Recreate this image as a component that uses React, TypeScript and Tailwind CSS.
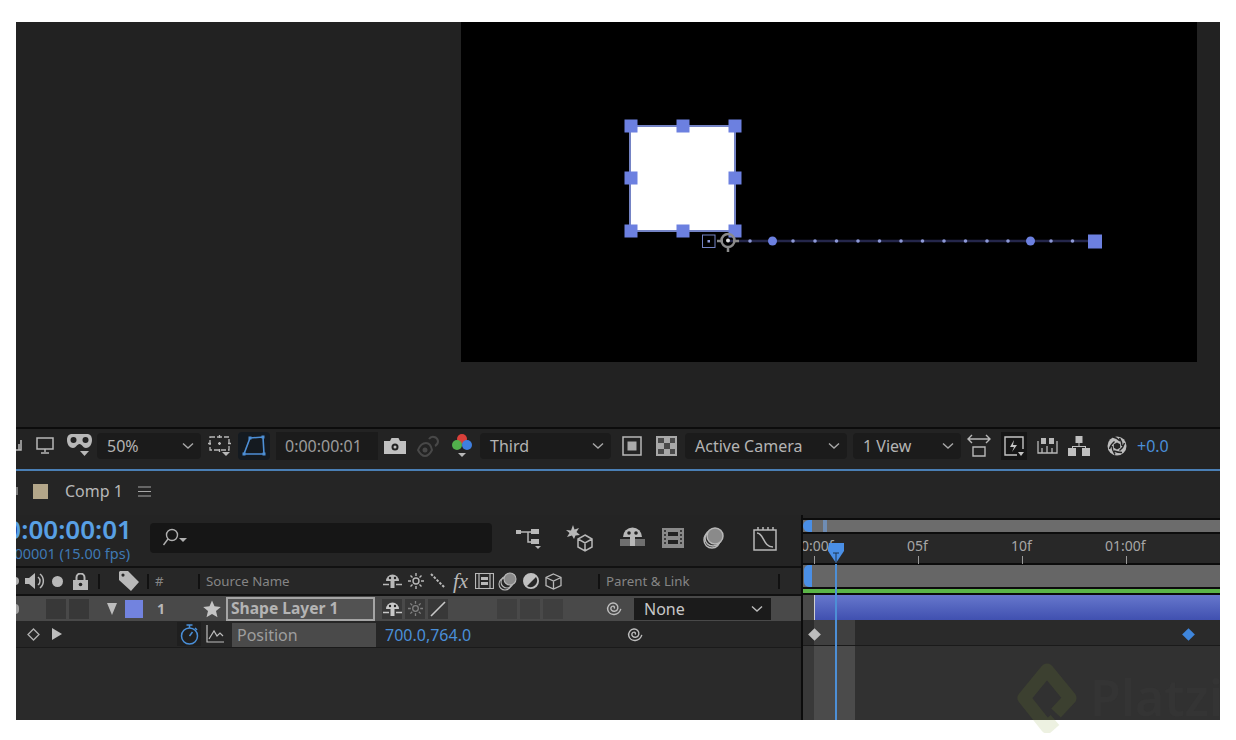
import type { ReactNode } from 'react';

const font = "font-['Noto_Sans','Open_Sans',sans-serif]";

function Chevron({ className = '' }: { className?: string }) {
  return (
    <svg className={`w-3 h-2 ${className}`} viewBox="0 0 12 8" fill="none" stroke="currentColor" strokeWidth={1.4}>
      <path d="M1 1.500l5 4.500 5-4.500" />
    </svg>
  );
}

function Select({ label, width, ml }: { label: string; width: string; ml: string }) {
  return (
    <div className={`${width} ${ml} h-[26px] shrink-0 bg-[#1b1b1b] rounded-sm flex items-center justify-between pl-[10px] pr-[7px] text-[16px] text-[#b4b4b4]`}>
      <span>{label}</span>
      <Chevron className="text-[#a8a8a8]" />
    </div>
  );
}

function Icon({ w, h, ml, children }: { w: number; h: number; ml: string; children: ReactNode }) {
  return (
    <svg
      className={`${ml} shrink-0 text-[#b8b8b8]`}
      width={w}
      height={h}
      viewBox={`0 0 ${w} ${h}`}
      fill="none"
      stroke="currentColor"
      strokeWidth={1.5}
    >
      {children}
    </svg>
  );
}

function Sep({ ml }: { ml: string }) {
  return <div className={`${ml} w-[2px] h-[15px] bg-[#111] shrink-0`} />;
}

function Spiral() {
  return (
    <path d="M9 9.500c1-1 .2-2.600-1.200-2.400-2 .2-2.600 2.800-1.200 4.200 2 2 5.600.8 6.200-2 .6-3-2-5.600-5-5.300-3.400.3-5.800 3.700-5 7 .7 3 3.600 4.800 6.600 4.500 3-.3 5.600-2.600 6.400-5.600" />
  );
}

function Shy() {
  return (
    <>
      <path d="M3 8a6.500 6.500 0 0 1 13 0z" fill="currentColor" stroke="none" />
      <circle cx="7" cy="5" r="1.200" fill="#222" stroke="none" />
      <circle cx="12" cy="5" r="1.200" fill="#222" stroke="none" />
      <path d="M7.500 8h4v7h-4z" fill="currentColor" stroke="none" />
      <path d="M0 11.500h6M13 11.500h6" />
    </>
  );
}

function Sun({ size, className }: { size: number; className: string }) {
  return (
    <svg className={className} width={size} height={size} viewBox="0 0 16 16" fill="none" stroke="currentColor" strokeWidth={1.4}>
      <circle cx="8" cy="8" r="3" />
      <path d="M8 0v3M8 13v3M0 8h3M13 8h3M2.500 2.500l2 2M11.500 11.500l2 2M13.500 2.500l-2 2M4.500 11.500l-2 2" />
    </svg>
  );
}

function Star({ className }: { className: string }) {
  return (
    <svg className={className} width="18" height="18" viewBox="0 0 18 18" fill="currentColor">
      <path d="M9 .5l2.500 5.800 6.300.6-4.800 4.100 1.500 6.200L9 13.900l-5.500 3.300L5 11 .2 6.900l6.300-.6z" />
    </svg>
  );
}

function Toolbar() {
  return (
    <div className="h-[42px] border-t-2 border-[#0c0c0c] bg-[#232323] flex items-center shrink-0 overflow-hidden pb-[7px]">
      <Icon w={7} h={14} ml="ml-0">
        <path d="M0 11h5V1M3 11V5" />
      </Icon>
      {/* monitor */}
      <Icon w={18} h={17} ml="ml-[13px]">
        <path d="M1 1h16v11H1zM9 12v3M5 16h8" />
      </Icon>
      {/* 3d glasses */}
      <Icon w={25} h={23} ml="ml-[13px]">
        <path
          d="M5 0h15c3 0 5 2 5 6 0 5-3 8-6 8-3 0-4-4-6.500-4S9 14 6 14C3 14 0 11 0 6c0-4 2-6 5-6z"
          fill="currentColor"
          stroke="none"
        />
        <circle cx="6.500" cy="6" r="3" fill="#222" stroke="none" />
        <circle cx="18.500" cy="6" r="3" fill="#222" stroke="none" />
        <path d="M13 17h9l-4.500 5z" fill="currentColor" stroke="none" />
      </Icon>
      <Select label="50%" width="w-[104px]" ml="ml-[5px]" />
      {/* grid */}
      <Icon w={23} h={24} ml="ml-[7px]">
        <path d="M2 3h19v13H2z" strokeWidth={1.3} strokeDasharray="5 2" />
        <path d="M11.500 1v3M11.500 15v3M0 9.500h3M20 9.500h3M10 9.500h3M11.500 8v3" strokeWidth={1.3} />
        <path d="M14 18h8l-4 4z" fill="currentColor" stroke="none" />
      </Icon>
      {/* mask and shape path */}
      <div className="ml-[7px] w-[32px] h-[28px] shrink-0 bg-[#141a20] rounded-sm flex items-center justify-center">
        <svg width="24" height="22" viewBox="0 0 24 22" fill="none" stroke="#4d8fd6" strokeWidth={1.6}>
          <path d="M8 3l13-1 1 17H2z" />
          <path d="M6.500 1.500h3v3h-3zM19.500 .5h3v3h-3zM.5 17.500h3v3h-3zM20.500 17.500h3v3h-3z" fill="#4d8fd6" stroke="none" />
        </svg>
      </div>
      <div className="ml-[6px] w-[102px] h-[28px] shrink-0 bg-[#1b1b1b] flex items-center pl-[9px] text-[16px] text-[#9c9c9c]">
        0:00:00:01
      </div>
      {/* camera */}
      <Icon w={22} h={16} ml="ml-[6px]">
        <path d="M0 3h6l1.500-3h7L16 3h6v13H0z" fill="#c0c0c0" stroke="none" />
        <circle cx="11" cy="9" r="3.500" fill="#222" stroke="none" />
        <circle cx="11" cy="9" r="1.500" fill="#c0c0c0" stroke="none" />
      </Icon>
      {/* show snapshot, disabled */}
      <svg className="ml-[11px] shrink-0" width="23" height="22" viewBox="0 0 23 22" fill="none" stroke="#484848" strokeWidth={2}>
        <path d="M1 15c2-5 5-7 8-7s5 2 6 7c-2 4-4 6-7 6s-5-2-7-6z" />
        <circle cx="8" cy="15" r="2.500" fill="#484848" stroke="none" />
        <path d="M12 4a5 5 0 0 1 9 2c0 2-1 4-3 5" />
      </svg>
      {/* channels */}
      <svg className="ml-[12px] shrink-0" width="20" height="25" viewBox="0 0 20 25">
        <circle cx="10" cy="6" r="5" fill="#d9403a" />
        <circle cx="5" cy="12" r="5" fill="#52b04c" />
        <circle cx="15" cy="12" r="5" fill="#3f7fe0" />
        <path d="M6 20h8l-4 4z" fill="#b8b8b8" />
      </svg>
      <Select label="Third" width="w-[131px]" ml="ml-[8px]" />
      {/* region of interest */}
      <Icon w={20} h={20} ml="ml-[11px]">
        <path d="M1 1h18v18H1z" />
        <path d="M5.500 5.500h9v9h-9z" fill="#aaa" stroke="none" />
      </Icon>
      {/* transparency grid */}
      <svg className="ml-[14px] shrink-0" width="21" height="20" viewBox="0 0 21 20">
        <path d="M0 0h21v20H0z" fill="#a8a8a8" />
        <path d="M2 2h6v5H2zM14 2h5v5h-5zM8 7h6v6H8zM2 13h6v5H2zM14 13h5v5h-5z" fill="#4a4a4a" />
      </svg>
      <Select label="Active Camera" width="w-[162px]" ml="ml-[8px]" />
      <Select label="1 View" width="w-[108px]" ml="ml-[6px]" />
      {/* pixel aspect */}
      <Icon w={24} h={24} ml="ml-[6px]">
        <path d="M1 5h22M5 1L1 5l4 4M19 1l4 4-4 4M6 13h12v9H6z" strokeWidth={1.4} />
      </Icon>
      {/* fast previews */}
      <div className="ml-[10px] w-[26px] h-[28px] shrink-0 bg-[#161616] flex items-center justify-center">
        <svg className="text-[#c4c4c4]" width="22" height="22" viewBox="0 0 22 22" fill="none" stroke="currentColor" strokeWidth={1.4}>
          <path d="M14 20H2V2h18v12" />
          <path d="M11 5l-4 7h4l-2 5 5-7h-4z" fill="currentColor" stroke="none" />
          <path d="M15 17h6l-3 4z" fill="currentColor" stroke="none" />
        </svg>
      </div>
      {/* timeline */}
      <Icon w={21} h={18} ml="ml-[10px]">
        <path d="M1 4v12h19V4M5 16v-5M10 16V9M15 16v-5" strokeWidth={1.3} />
        <path d="M4 1h5v6H4zM12 1h5v6h-5z" fill="currentColor" stroke="none" />
      </Icon>
      {/* flowchart */}
      <svg className="ml-[10px] shrink-0 text-[#c0c0c0]" width="22" height="20" viewBox="0 0 22 20" fill="currentColor">
        <path d="M7.500 0h7v7h-7zM0 12h8v8H0zM14 12h8v8h-8z" />
        <path d="M10.500 7h1v3H18v3h-1v-2H5v2H4v-3h6.500z" />
      </svg>
      {/* exposure */}
      <svg className="ml-[17px] shrink-0" width="20" height="20" viewBox="0 0 20 20" fill="none">
        <circle cx="10" cy="10" r="9.500" fill="#bdbdbd" />
        <path d="M13 5C11 3 9 1.500 6 1M15 10c0-3-.5-5-2.500-8M12.500 14.500C14.500 13 16.500 11 17.500 7M7 15c2.500 1 5 1.500 8 1.500M5 10c0 2.500 .5 5 3 8.500M7.500 5.500C5.500 7 3.500 9 2.500 13" stroke="#232323" strokeWidth={1.4} />
        <path d="M10 6.500l3.200 1.800v3.500L10 13.500l-3.200-1.700V8.300z" fill="#232323" />
      </svg>
      <span className="ml-[10px] text-[16px] text-[#4a8fd8] shrink-0">+0.0</span>
    </div>
  );
}

function LeftPane() {
  return (
    <div className="w-[785px] shrink-0 flex flex-col overflow-hidden">
      {/* time and search */}
      <div className="h-[51px] shrink-0 flex items-start overflow-hidden">
        <div className="w-[142px] shrink-0 -ml-[8px]">
          <div className="flex justify-end pr-[18px] text-[26px] leading-[28px] font-semibold text-[#58a0e4] whitespace-nowrap">0:00:00:01</div>
          <div className="flex justify-end pr-[20px] text-[14.5px] leading-[18px] mt-[1px] text-[#3f79b4] whitespace-nowrap">00001 (15.00 fps)</div>
        </div>
        <div className="mt-[8px] w-[342px] h-[30px] bg-[#161616] rounded-sm flex items-center pl-[12px] shrink-0">
          <svg className="text-[#b0b0b0]" width="26" height="20" viewBox="0 0 26 20" fill="none" stroke="currentColor" strokeWidth={1.4}>
            <circle cx="10" cy="7" r="5.500" />
            <path d="M6 11l-4.500 6" />
            <path d="M17 10h8l-4 4z" fill="currentColor" stroke="none" />
          </svg>
        </div>
        <div className="flex items-center mt-[8px] h-[30px]">
          <Icon w={26} h={24} ml="ml-[24px]">
            <path d="M0 4h5v4H0zM15 3h8v5h-8zM15 13h8v5h-8z" fill="currentColor" stroke="none" />
            <path d="M5 6h10M12 6v10h3" />
            <path d="M19 20h6l-3 3z" fill="currentColor" stroke="none" />
          </Icon>
          <Icon w={28} h={28} ml="ml-[24px]">
            <path d="M7 1l1.500 4.500L13 4l-2.500 4L14 11l-4.500.5L8 15l-2-3.500L1 13l2.500-4L0 6l5 .5z" fill="currentColor" stroke="none" />
            <path d="M19 11l7 4v8l-7 4-7-4v-8zM12 15l7 4 7-4M19 19v8" />
          </Icon>
          <Icon w={25} h={24} ml="ml-[26px]">
            <path d="M3 11a9.500 9.500 0 0 1 19 0z" fill="currentColor" stroke="none" />
            <circle cx="9" cy="7" r="1.800" fill="#222" stroke="none" />
            <circle cx="16" cy="7" r="1.800" fill="#222" stroke="none" />
            <path d="M0 13h25v7H0z" fill="#6f6f6f" stroke="none" />
            <path d="M10 11h5v9h-5z" fill="currentColor" stroke="none" />
          </Icon>
          <Icon w={22} h={24} ml="ml-[17px]">
            <path d="M0 2h22v20H0z" fill="#8a8a8a" stroke="none" />
            <path d="M6 6h10v4H6zM6 14h10v4H6z" fill="#222" stroke="none" />
            <path d="M2 5h2M2 9h2M2 13h2M2 17h2M18 5h2M18 9h2M18 13h2M18 17h2" stroke="#222" />
          </Icon>
          <Icon w={22} h={24} ml="ml-[18px]">
            <circle cx="10" cy="14" r="8" />
            <circle cx="11" cy="12" r="8" />
            <circle cx="13" cy="10" r="8" fill="#8a8a8a" />
          </Icon>
          <Icon w={26} h={26} ml="ml-[28px]">
            <path d="M2 5h22v20H2zM6 5V2M11 5V2M16 5V2M21 5V2" />
            <path d="M5 8c7 0 6 14 16 14" />
          </Icon>
        </div>
      </div>

      {/* column headers */}
      <div className="h-[30px] shrink-0 border-y-2 border-[#111] bg-[#272727] flex items-center text-[13.3px] text-[#858585]">
        <svg className="shrink-0" width="3" height="10" viewBox="0 0 3 10">
          <circle cx="-1" cy="5" r="4" fill="#b0b0b0" />
        </svg>
        <svg className="ml-[6px] shrink-0 text-[#b8b8b8]" width="20" height="20" viewBox="0 0 20 20" fill="none" stroke="currentColor" strokeWidth={1.5}>
          <path d="M0 7h4l6-5v16l-6-5H0z" fill="currentColor" stroke="none" />
          <path d="M13 6a5 5 0 0 1 0 8M15 3a9 9 0 0 1 0 14" />
        </svg>
        <div className="ml-[7px] w-[11px] h-[11px] rounded-full bg-[#b8b8b8] shrink-0" />
        <svg className="ml-[10px] shrink-0 text-[#b8b8b8]" width="15" height="17" viewBox="0 0 15 17" fill="none" stroke="currentColor" strokeWidth={2}>
          <path d="M3.500 7V4.500a4 4 0 0 1 8 0V7" />
          <path d="M0 7h15v10H0z" fill="currentColor" stroke="none" />
          <circle cx="7.500" cy="11.500" r="1.800" fill="#222" stroke="none" />
        </svg>
        <Sep ml="ml-[10px]" />
        <svg className="ml-[19px] shrink-0 text-[#b8b8b8]" width="20" height="20" viewBox="0 0 20 20" fill="currentColor">
          <path fillRule="evenodd" d="M1 0h8l11 11-8 9L0 9V1zm3 2.500a1.600 1.600 0 1 0 0 3.200 1.600 1.600 0 0 0 0-3.200z" />
        </svg>
        <Sep ml="ml-[8px]" />
        <span className="ml-[6px] w-[10px] pt-[1px]">#</span>
        <Sep ml="ml-[33px]" />
        <span className="ml-[6px] w-[177px] shrink-0 pt-[1px]">Source Name</span>
        <svg className="shrink-0 text-[#b8b8b8]" width="19" height="16" viewBox="0 0 19 16" fill="none" stroke="currentColor" strokeWidth={1.5}>
          <Shy />
        </svg>
        <Sun size={16} className="ml-[6px] shrink-0 text-[#b8b8b8]" />
        <svg className="ml-[6px] shrink-0 text-[#b8b8b8]" width="16" height="16" viewBox="0 0 16 16" stroke="currentColor" strokeWidth={2} strokeDasharray="2.500 1.500">
          <path d="M1 1l14 14" />
        </svg>
        <span className="ml-[7px] w-[18px] shrink-0 text-[21px] leading-none italic text-[#b8b8b8] font-['Liberation_Serif',serif]">fx</span>
        <svg className="ml-[4px] shrink-0 text-[#b8b8b8]" width="19" height="16" viewBox="0 0 19 16" fill="none" stroke="currentColor" strokeWidth={1.2}>
          <path d="M.5.5h18v15H.5zM4 .5v15M15 .5v15" />
          <path d="M6 4h7v3H6zM6 9h7v3H6z" fill="currentColor" stroke="none" />
        </svg>
        <svg className="ml-[4px] shrink-0 text-[#b8b8b8]" width="19" height="19" viewBox="0 0 19 19" fill="none" stroke="currentColor" strokeWidth={1.1}>
          <circle cx="7" cy="12" r="6" />
          <circle cx="9" cy="10" r="6" />
          <circle cx="12" cy="7" r="6" fill="#8a8a8a" />
        </svg>
        <svg className="ml-[6px] shrink-0 text-[#c0c0c0]" width="16" height="16" viewBox="0 0 16 16" fill="currentColor">
          <path d="M8 0a8 8 0 1 1 0 16A8 8 0 0 1 8 0zm5 4L4 13a6.500 6.500 0 0 0 9-9z" fillRule="evenodd" />
        </svg>
        <svg className="ml-[6px] shrink-0 text-[#b8b8b8]" width="17" height="17" viewBox="0 0 17 17" fill="none" stroke="currentColor" strokeWidth={1.3}>
          <path d="M8.500 1L16 4.500v8L8.500 16 1 12.500v-8zM1 4.500L8.500 8 16 4.500M8.500 8v8" />
        </svg>
        <Sep ml="ml-[36px]" />
        <span className="ml-[6px] w-[172px] shrink-0 pt-[1px]">Parent &amp; Link</span>
        <Sep ml="ml-0" />
      </div>

      {/* layer row */}
      <div className="h-[25px] shrink-0 bg-[#494949] flex items-center text-[16px]">
        <div className="w-[4px] h-[10px] rounded-r-full bg-[#a0a0a0] -ml-[1px] shrink-0" />
        <div className="ml-[27px] w-[20px] h-[20px] bg-[#383838] shrink-0" />
        <div className="ml-[3px] w-[20px] h-[20px] bg-[#383838] shrink-0" />
        <svg className="ml-[18px] shrink-0" width="10" height="12" viewBox="0 0 10 12">
          <path d="M0 0h10L5 12z" fill="#bdbdbd" />
        </svg>
        <div className="ml-[8px] w-[18px] h-[18px] bg-[#7283df] shrink-0" />
        <span className="ml-[14px] w-[8px] font-bold text-[#b8b8b8] text-[14px]">1</span>
        <Star className="ml-[38px] shrink-0 text-[#c4c4c4]" />
        <div className="ml-[5px] w-[149px] h-[24px] shrink-0 border-2 border-[#a5a5a5] bg-[#525252] flex items-center pl-[3px] font-bold text-[#b4b4b4] text-[15.6px] whitespace-nowrap">
          Shape Layer 1
        </div>
        <div className="ml-[7px] w-[20px] h-[20px] bg-[#383838] shrink-0 flex items-center justify-center">
          <svg className="text-[#c8c8c8]" width="19" height="16" viewBox="0 0 19 16" fill="none" stroke="currentColor" strokeWidth={1.5}>
            <Shy />
          </svg>
        </div>
        <div className="ml-[3px] w-[20px] h-[20px] bg-[#383838] shrink-0 flex items-center justify-center">
          <Sun size={15} className="text-[#808080]" />
        </div>
        <div className="ml-[3px] w-[20px] h-[20px] bg-[#383838] shrink-0 flex items-center justify-center">
          <svg className="text-[#c8c8c8]" width="16" height="16" viewBox="0 0 16 16" stroke="currentColor" strokeWidth={1.6}>
            <path d="M1 15L15 1" />
          </svg>
        </div>
        <div className="ml-[49px] w-[20px] h-[20px] bg-[#3f3f3f] shrink-0" />
        <div className="ml-[3px] w-[20px] h-[20px] bg-[#3f3f3f] shrink-0" />
        <div className="ml-[3px] w-[20px] h-[20px] bg-[#3f3f3f] shrink-0" />
        <svg className="ml-[42px] shrink-0 text-[#bdbdbd]" width="19" height="19" viewBox="0 0 19 19" fill="none" stroke="currentColor" strokeWidth={1.4}>
          <Spiral />
        </svg>
        <div className="ml-[10px] w-[137px] h-[22px] shrink-0 bg-[#1b1b1b] flex items-center justify-between pl-[10px] pr-[8px] text-[#c8c8c8]">
          <span>None</span>
          <Chevron className="text-[#bdbdbd]" />
        </div>
      </div>

      {/* property row */}
      <div className="h-[27px] shrink-0 bg-[#262626] border-b border-[#1a1a1a] flex items-center text-[16px]">
        <svg className="ml-[11px] shrink-0 text-[#b0b0b0]" width="13" height="13" viewBox="0 0 13 13" fill="none" stroke="currentColor" strokeWidth={1.3}>
          <path d="M6.500 1l5.500 5.500L6.500 12 1 6.500z" />
        </svg>
        <svg className="ml-[12px] shrink-0" width="10" height="12" viewBox="0 0 10 12">
          <path d="M0 0l10 6-10 6z" fill="#bdbdbd" />
        </svg>
        <div className="ml-[115px] w-[24px] h-[24px] bg-[#1f1f1f] shrink-0 flex items-center justify-center">
          <svg className="text-[#4a8fd8]" width="19" height="21" viewBox="0 0 19 21" fill="none" stroke="currentColor" strokeWidth={1.5}>
            <circle cx="9.500" cy="12" r="8" />
            <path d="M6.500 1h6M9.500 1v3M9.500 12l3-4M15 4l2 2" />
          </svg>
        </div>
        <svg className="ml-[5px] shrink-0 text-[#bdbdbd]" width="18" height="18" viewBox="0 0 18 18" fill="none" stroke="currentColor" strokeWidth={1.2}>
          <path d="M1 0v17h17M3 14l5-8 3 5 3-3 3 3" />
        </svg>
        <div className="ml-[8px] w-[144px] h-[24px] mt-[2px] bg-[#4a4a4a] shrink-0 flex items-center pl-[5px] text-[#9e9e9e]">Position</div>
        <span className="ml-[9px] w-[241px] pt-[1px] shrink-0 text-[#4a8fd8] text-[16px]">700.0,764.0</span>
        <svg className="shrink-0 text-[#bdbdbd]" width="19" height="19" viewBox="0 0 19 19" fill="none" stroke="currentColor" strokeWidth={1.4}>
          <Spiral />
        </svg>
      </div>
      <div className="flex-1 bg-[#2a2a2a]" />
    </div>
  );
}

function RightPane() {
  return (
    <div className="flex-1 min-w-0 relative flex flex-col overflow-hidden">
      <div className="h-[3px] shrink-0" />
      {/* navigator */}
      <div className="h-[16px] shrink-0 border-y-2 border-[#0c0c0c] bg-[#6c6c6c] relative">
        <div className="absolute left-0 top-0 h-full w-[9px] bg-[#4a8fe6] rounded-l-full" />
        <div className="absolute left-[20px] top-0 h-full w-[4px] bg-[#6f8db4]" />
      </div>
      {/* ruler */}
      <div className="h-[31px] shrink-0 bg-[#282828] border-b-2 border-[#0c0c0c] relative text-[14px] leading-none text-[#a6a6a6]">
        <span className="absolute -left-[2px] top-[5px]">0:00f</span>
        <span className="absolute left-[104px] top-[5px]">05f</span>
        <span className="absolute left-[208px] top-[5px]">10f</span>
        <span className="absolute left-[302px] top-[5px]">01:00f</span>
        <div className="absolute left-[11px] top-[22px] w-px h-[8px] bg-[#9a9a9a]" />
        <div className="absolute left-[115px] top-[22px] w-px h-[8px] bg-[#9a9a9a]" />
        <div className="absolute left-[219px] top-[22px] w-px h-[8px] bg-[#9a9a9a]" />
        <div className="absolute left-[323px] top-[22px] w-px h-[8px] bg-[#9a9a9a]" />
      </div>
      {/* work area */}
      <div className="h-[24px] shrink-0 bg-[#666] border-b-2 border-[#0c0c0c] relative">
        <div className="absolute left-[1px] top-0 h-[22px] w-[8px] bg-[#4a8fe6] rounded-l-[5px]" />
      </div>
      <div className="h-[6px] shrink-0 bg-[#5bb548] border-b-2 border-[#0c0c0c]" />
      {/* layer bar */}
      <div className="h-[25px] shrink-0 bg-[#4a4a4a] pl-[11px]">
        <div className="h-full border-l border-[#cfcfcf] bg-gradient-to-b from-[#6777cc] to-[#4050b0]" />
      </div>
      {/* keyframes and lower area */}
      <div className="flex-1 grid grid-cols-[11px_41px_1fr] grid-rows-[26px_1fr]">
        <div className="bg-[#2b2b2b] border-b border-[#1a1a1a]" />
        <div className="bg-[#404040] border-b border-[#1a1a1a]" />
        <div className="bg-[#2a2a2a] border-b border-[#1a1a1a]" />
        <div className="bg-[#393939]" />
        <div className="bg-[#4b4b4b]" />
        <div className="bg-[#313131]" />
      </div>
      <div className="absolute left-[5px] top-[113px] w-[12px] h-[12px] flex items-center justify-center">
        <div className="w-[9px] h-[9px] rotate-45 bg-[#bdbdbd]" />
      </div>
      <div className="absolute left-[379px] top-[113px] w-[12px] h-[12px] flex items-center justify-center">
        <div className="w-[9px] h-[9px] rotate-45 bg-[#3f86dc]" />
      </div>
      {/* playhead */}
      <div className="absolute left-[32px] top-[49px] bottom-0 w-[2px] bg-[#4d8fd6]" />
      <svg className="absolute left-[24px] top-[28px]" width="18" height="21" viewBox="0 0 18 21">
        <path d="M2 0h15v8l-8 12-8-12V5z" fill="#4a8fe6" />
        <path d="M6 10h6M9 10v9" stroke="#1c3550" strokeWidth={1} />
      </svg>
      <span className="absolute left-[287px] top-[157px] text-[#343434] text-[50px] font-semibold leading-none whitespace-nowrap">
        Platzi
      </span>
    </div>
  );
}

function Viewer() {
  const dots = [750, 793, 815, 836.5, 858, 879.5, 901, 922.5, 944, 965.5, 987, 1008, 1051, 1072.5];
  const handles = [
    [631, 126],
    [683, 126],
    [735, 126],
    [631, 178],
    [735, 178],
    [631, 231],
    [683, 231],
    [735, 231],
  ];
  return (
    <div className="h-[405px] shrink-0 bg-[#222] flex justify-end pr-[23px]">
      <div className="w-[736px] h-[340px] bg-black">
        <svg className="block" width="736" height="340" viewBox="461 22 736 340">
          <rect x="630" y="126" width="105" height="105" fill="#fff" stroke="#7483c4" strokeWidth={2} />
          {handles.map(([x, y]) => (
            <rect key={`${x}-${y}`} x={x - 6.5} y={y - 6.5} width="13" height="13" fill="#6c80e0" />
          ))}
          <path d="M728 241H1095" stroke="#24264a" strokeWidth={2.5} />
          {dots.map((x) => (
            <circle key={x} cx={x} cy="241" r="1.800" fill="#8e9ad8" />
          ))}
          <circle cx="772.500" cy="241" r="4.500" fill="#6c80e0" />
          <circle cx="1030.500" cy="241" r="4.500" fill="#6c80e0" />
          <rect x="1088" y="234.500" width="14" height="14" fill="#6c80e0" />
          <rect x="702.500" y="235" width="12.500" height="12.500" fill="none" stroke="#7483c4" strokeWidth={1} />
          <rect x="707.500" y="240" width="2.500" height="2.500" fill="#8e9ad8" />
          <circle cx="728" cy="240.500" r="6.500" fill="none" stroke="#8a8a8a" strokeWidth={2.5} />
          <path d="M717 241h6M733 241h6M728 252v-5" stroke="#8a8a8a" strokeWidth={2.5} />
          <circle cx="728" cy="240.500" r="2" fill="#ddd" />
        </svg>
      </div>
    </div>
  );
}

export default function App() {
  return (
    <div className={`relative w-[1236px] h-[740px] bg-white pt-[22px] px-[16px] pb-[20px] ${font}`}>
      <div className="h-full flex flex-col bg-[#242424] overflow-hidden">
        <Viewer />
        <Toolbar />
        <div className="h-[2px] shrink-0 bg-[#4a7fb5]" />

        {/* comp tab */}
        <div className="h-[44px] shrink-0 flex items-center bg-[#252525] pb-[4px]">
          <div className="w-[2px] h-[8px] bg-[#777] shrink-0" />
          <div className="ml-[15px] w-[15px] h-[15px] bg-[#b3a689] shrink-0" />
          <span className="ml-[17px] text-[16px] text-[#b8b8b8]">Comp 1</span>
          <svg className="ml-[15px] shrink-0 text-[#a8a8a8]" width="13" height="11" viewBox="0 0 13 11" stroke="currentColor" strokeWidth={1.2}>
            <path d="M0 1h13M0 5.500h13M0 10h13" />
          </svg>
        </div>

        {/* timeline */}
        <div className="flex-1 min-h-0 flex">
          <LeftPane />
          <div className="w-[2px] shrink-0 bg-[#0c0c0c]" />
          <RightPane />
        </div>
      </div>
      {/* watermark logo, runs past the bottom of the frame */}
      <svg className="absolute left-[1017px] top-[663px]" width="60" height="70" viewBox="0 0 60 70" fill="none" stroke="#7f9a28" strokeOpacity={0.14} strokeWidth={13} strokeLinejoin="round">
        <path d="M38 57l-8 7L7 35 30 7l23 28-14 15" />
      </svg>
    </div>
  );
}
